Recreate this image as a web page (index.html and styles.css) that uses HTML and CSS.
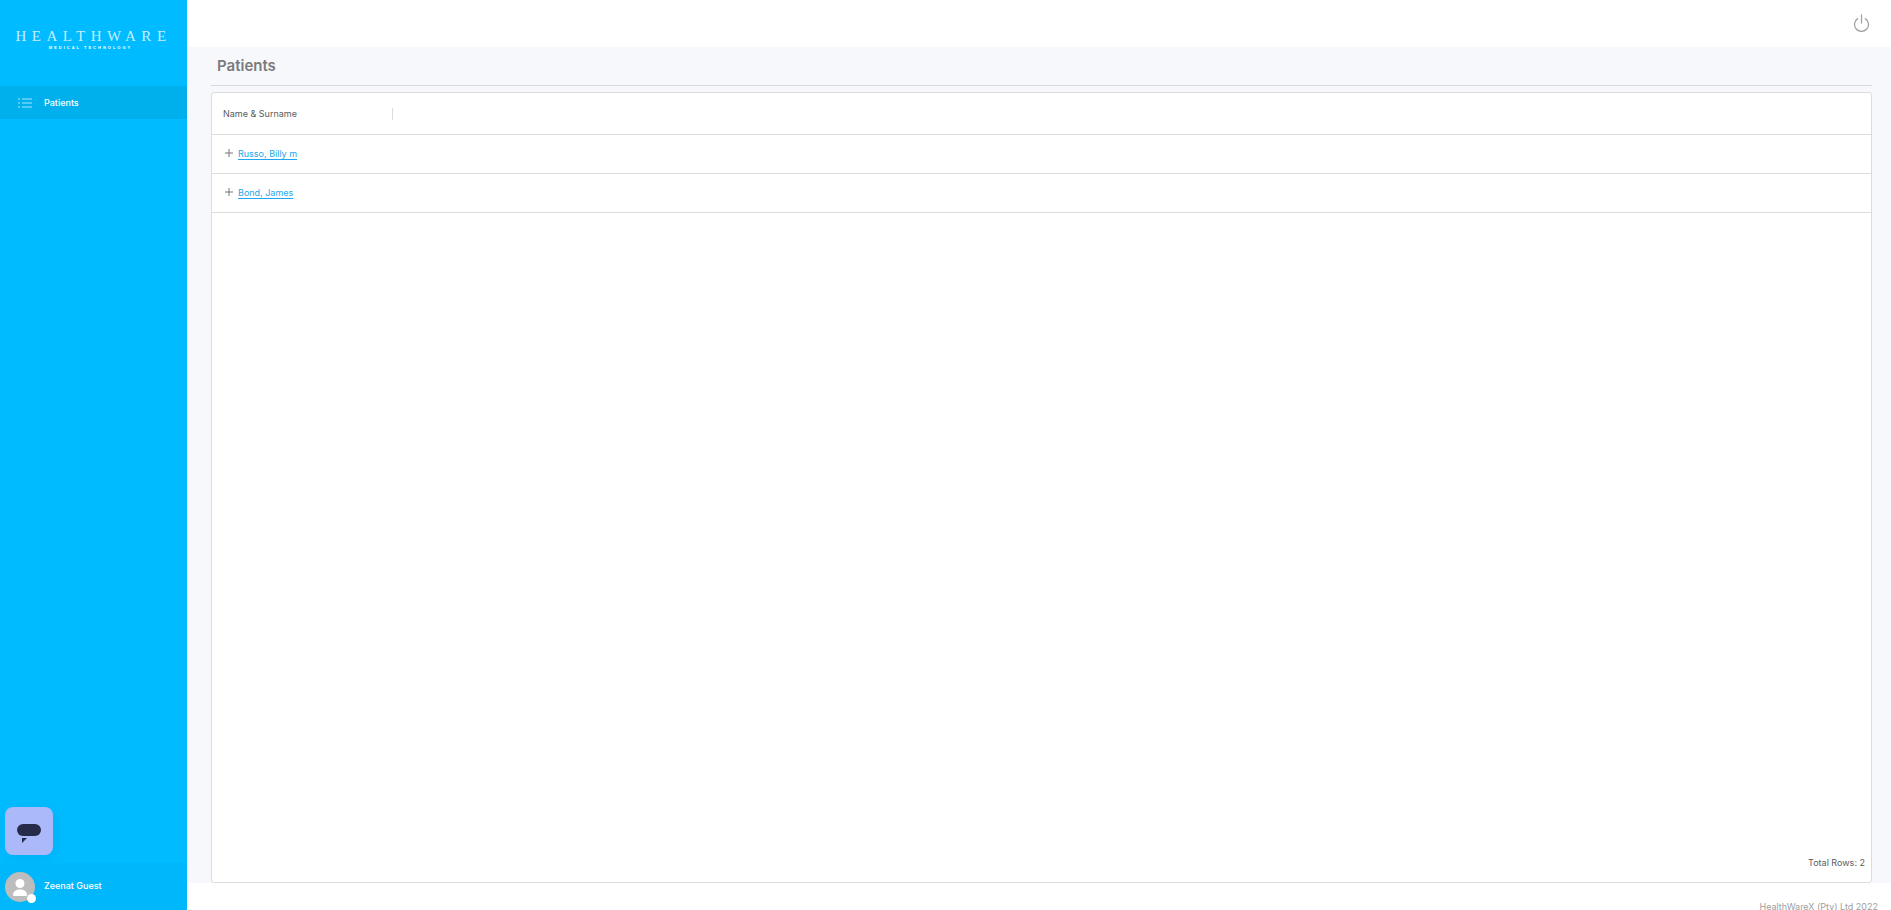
FILE: index.html
```html
<!DOCTYPE html>
<html lang="en">
<head>
  <meta charset="UTF-8">
  <meta name="viewport" content="width=device-width, initial-scale=1.0">
  <title>Patients</title>
  <link rel="stylesheet" href="styles.css">
</head>
<body>
  <div id="app">
    <aside class="sidebar">
      <div class="logo">
        <div class="logo-name">HEALTHWARE</div>
        <div class="logo-sub">MEDICAL TECHNOLOGY</div>
      </div>
      <nav class="nav">
        <a class="nav-item" href="#">
          <svg class="nav-icon" width="14" height="10" viewBox="0 0 14 10" fill="none" stroke="#a6e6ff" stroke-width="1">
            <path d="M0 1h2M4 1h10M0 5h2M4 5h10M0 9h2M4 9h10"/>
          </svg>
          <span>Patients</span>
        </a>
      </nav>
      <div class="chat-slot">
        <button class="chat-btn" aria-label="Chat">
          <svg width="24" height="20" viewBox="0 0 24 20">
            <rect x="0" y="0" width="24" height="12" rx="6" fill="#272b4a"/>
            <path d="M5 14h5l-5 5z" fill="#272b4a"/>
          </svg>
        </button>
      </div>
      <div class="user">
        <div class="avatar">
          <svg width="30" height="30" viewBox="0 0 30 30" fill="#fff">
            <circle cx="15" cy="11.5" r="4.5"/>
            <path d="M8 23c0-3.5 3-5.5 7-5.5s7 2 7 5.5c0 .6-.5 1-1 1H9c-.5 0-1-.4-1-1z"/>
          </svg>
          <span class="status"></span>
        </div>
        <span class="user-name">Zeenat Guest</span>
      </div>
    </aside>

    <div class="main">
      <header class="topbar">
        <svg width="17" height="18" viewBox="0 0 17 18" fill="none" stroke="#a3a3a3" stroke-width="1.3" stroke-linecap="round">
          <path d="M8.5 1v8"/>
          <path d="M4.6 4.6a7 7 0 1 0 7.8 0"/>
        </svg>
      </header>
      <div class="content">
        <h1 class="page-title">Patients</h1>
        <section class="card">
          <div class="table-head">
            <div class="col-name">Name &amp; Surname</div>
          </div>
          <div class="row">
            <svg class="plus" width="8" height="8" viewBox="0 0 8 8" stroke="#777" stroke-width="1">
              <path d="M4 0v8M0 4h8"/>
            </svg>
            <a class="patient" href="#">Russo, Billy m</a>
          </div>
          <div class="row">
            <svg class="plus" width="8" height="8" viewBox="0 0 8 8" stroke="#777" stroke-width="1">
              <path d="M4 0v8M0 4h8"/>
            </svg>
            <a class="patient" href="#">Bond, James</a>
          </div>
          <div class="table-space"></div>
          <div class="total">Total Rows: 2</div>
        </section>
      </div>
      <footer class="footer">HealthWareX (Pty) Ltd 2022</footer>
    </div>
  </div>
</body>
</html>
```

FILE: styles.css
```css
* {
  box-sizing: border-box;
}
html, body {
  height: 100%;
}
body {
  margin: 0;
  font-family: 'Inter', 'Liberation Sans', sans-serif;
  font-size: 9px;
  color: #5c5c5c;
  background-color: #fff;
  overflow: hidden;
}
#app {
  display: flex;
  height: 910px;
}

/* sidebar */
.sidebar {
  width: 187px;
  flex-shrink: 0;
  display: flex;
  flex-direction: column;
  background-color: #00bbff;
  color: #fff;
}
.logo {
  height: 86px;
  padding: 27px 6px 0 0;
  text-align: center;
}
.logo-name {
  font-family: 'Liberation Serif', serif;
  font-size: 15px;
  line-height: 18px;
  letter-spacing: 5.5px;
  margin-right: -6px;
  color: #c4eeff;
}
.logo-sub {
  font-family: 'Liberation Sans', sans-serif;
  font-size: 4px;
  font-weight: bold;
  line-height: 6px;
  letter-spacing: 2px;
}
.nav {
  flex: 1;
}
.nav-item {
  display: flex;
  align-items: center;
  height: 33px;
  padding-left: 18px;
  background-color: #00b0ec;
  color: #fff;
  font-weight: 500;
  text-decoration: none;
}
.nav-icon {
  margin-right: 12px;
}
.chat-slot {
  padding: 0 0 8px 5px;
}
.chat-btn {
  display: flex;
  align-items: center;
  justify-content: center;
  width: 48px;
  height: 48px;
  padding: 6px 0 0;
  border: none;
  border-radius: 8px;
  background-color: #abb9fb;
  box-shadow: 0 4px 14px rgba(0, 120, 190, 0.15);
}
.user {
  display: flex;
  align-items: center;
  height: 47px;
  padding: 0 0 2px 5px;
  background-color: #00b7fb;
}
.avatar {
  position: relative;
  width: 30px;
  height: 30px;
  margin: 2px 9px 0 0;
  border-radius: 50%;
  background-color: #bdbdbd;
}
.avatar svg {
  display: block;
}
.status {
  position: absolute;
  right: -1px;
  bottom: -1px;
  width: 9px;
  height: 9px;
  border-radius: 50%;
  background-color: #fff;
}
.user-name {
  font-weight: 500;
}

/* main area */
.main {
  flex: 1;
  display: flex;
  flex-direction: column;
  min-width: 0;
}
.topbar {
  height: 47px;
  display: flex;
  justify-content: flex-end;
  padding: 14px 21px 0 0;
  background-color: #fff;
}
.content {
  height: 836px;
  display: flex;
  flex-direction: column;
  padding: 0 19px 0 24px;
  background-color: #f7f8fc;
}
.page-title {
  height: 39px;
  margin: 0;
  padding: 9px 0 0 6px;
  border-bottom: 1px solid #d9d9d9;
  font-size: 15px;
  line-height: 19px;
  font-weight: 600;
  color: #7b7b7b;
}
.card {
  flex: 1;
  display: flex;
  flex-direction: column;
  margin-top: 6px;
  background-color: #fff;
  border: 1px solid #dcdcdc;
  border-radius: 3px;
}
.table-head {
  height: 42px;
  flex-shrink: 0;
  display: flex;
  align-items: center;
  padding-left: 11px;
  border-bottom: 1px solid #dcdcdc;
}
.col-name {
  width: 170px;
  height: 12px;
  line-height: 12px;
  border-right: 1px solid #dcdcdc;
}
.row {
  height: 39px;
  flex-shrink: 0;
  display: flex;
  align-items: center;
  padding: 0 0 2px 13px;
  border-bottom: 1px solid #dcdcdc;
}
.plus {
  margin-right: 5px;
}
.patient {
  color: #1ea7ee;
  text-underline-offset: 2px;
}
.table-space {
  flex: 1;
}
.total {
  padding: 0 6px 14px 0;
  text-align: right;
}
.footer {
  height: 27px;
  padding: 17px 13px 0 0;
  text-align: right;
  line-height: 13px;
  color: #a0a0a0;
  background-color: #fff;
}
```
